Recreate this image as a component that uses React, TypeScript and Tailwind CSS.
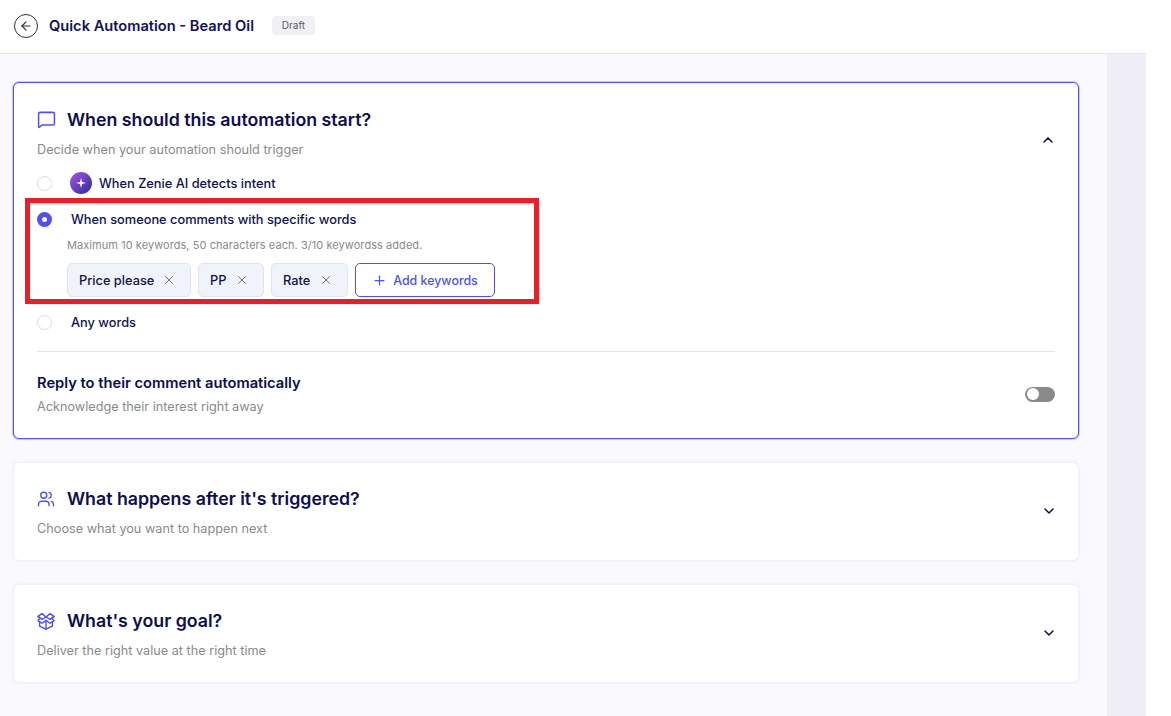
import { MessageSquare, Users, ChevronUp, ChevronDown, X, Plus, ArrowLeft } from "lucide-react";

const font = { fontFamily: "Inter, sans-serif" };

function BoxIcon() {
  return (
    <svg width="18" height="18" viewBox="0 0 18 18" fill="none" stroke="#4f4ff5" strokeWidth="1.4" strokeLinejoin="round" strokeLinecap="round">
      <path d="M9 5 5 1.6 1 4.4 5 7.4 9 5 13 7.4 17 4.4 13 1.6 9 5Z" />
      <path d="M1 4.4 3 6.2 1 8.8 5 11.2 9 8.4 13 11.2 17 8.8 15 6.2 17 4.4" />
      <path d="M2.6 10v4.2L9 17.2l6.4-3V10" />
      <path d="M9 8.4v8.8" />
    </svg>
  );
}

function Chip({ label, w }: { label: string; w: string }) {
  return (
    <div className={`${w} h-[34px] flex items-center justify-between pl-[11px] pr-[14px] rounded-[5px] border border-[#dfe5f1] bg-[#f0f3f9]`}>
      <span className="text-[12.8px] font-[450] text-[#11114f] pt-[1px]">{label}</span>
      <X size={14} strokeWidth={1.7} className="text-[#6b7280]" />
    </div>
  );
}

function Radio({ checked }: { checked?: boolean }) {
  return checked ? (
    <div className="w-[15px] h-[15px] rounded-full border-[5px] border-[#4f4ff5] bg-white" />
  ) : (
    <div className="w-[15px] h-[15px] rounded-full border border-[#dcdcdc] bg-white" />
  );
}

function Collapsed({ icon, title, sub }: { icon: React.ReactNode; title: string; sub: string }) {
  return (
    <section className="h-[99px] rounded-[6px] bg-white border border-[#f0f0f5] shadow-[0_0_3px_rgba(60,60,110,0.07)] pl-[23px] pr-[21px] pt-[24px] flex justify-between">
      <div>
        <div className="flex items-center gap-[12px] h-[24px]">
          <span className="w-[18px] flex justify-center">{icon}</span>
          <h2 className="text-[17.75px] font-semibold text-[#0d0d52] leading-[24px]">{title}</h2>
        </div>
        <p className="text-[12.7px] text-[#8a8a8a] mt-[9px] leading-[18px]">{sub}</p>
      </div>
      <ChevronDown size={16} strokeWidth={2.2} className="text-[#0d0d52] mt-[16px]" />
    </section>
  );
}

export default function App() {
  return (
    <div style={font} className="relative h-[716px] w-[1171px] overflow-hidden bg-white">
      <div className="w-[1146px] h-full flex flex-col">
        <header className="h-[54px] shrink-0 bg-white border-b border-[#e6e6f0] flex items-center pl-[14px] pb-[2px]">
          <div className="w-[24px] h-[24px] rounded-full border-[1.5px] border-[#2f2f3a] flex items-center justify-center">
            <ArrowLeft size={14} strokeWidth={2} className="text-[#2f2f3a]" />
          </div>
          <h1 className="ml-[11px] pt-[2px] text-[14.65px] font-semibold text-[#12125a]">Quick Automation - Beard Oil</h1>
          <span className="ml-[18px] h-[19px] w-[43px] rounded-[4px] bg-[#f1f1f4] flex items-center justify-center text-[10px] text-[#5b5b78]">Draft</span>
        </header>
        <div className="flex flex-1 min-h-0">
          <main className="w-[1107px] bg-[#f9f9fe] pl-[13px] pt-[28px] flex flex-col gap-[23px]">
            <section className="w-[1066px] h-[357px] rounded-[6px] bg-white border border-[#5353f5] ring-1 ring-[#5353f5]/30 pl-[23px] pr-[23px] pt-[25px]">
              <div className="flex justify-between">
                <div>
                  <div className="flex items-center gap-[11px] h-[24px]">
                    <MessageSquare size={19} strokeWidth={1.9} className="text-[#4f4ff5] -mt-[2px]" />
                    <h2 className="text-[17.75px] font-semibold text-[#0d0d52] leading-[24px]">When should this automation start?</h2>
                  </div>
                  <p className="text-[12.7px] text-[#8a8a8a] mt-[9px] leading-[18px]">Decide when your automation should trigger</p>
                </div>
                <ChevronUp size={16} strokeWidth={2.2} className="text-[#0d0d52] mt-[24px] -mr-[1px]" />
              </div>
              <div className="flex items-center mt-[13px] h-[22px]">
                <Radio />
                <div className="ml-[18px] w-[22px] h-[22px] rounded-full bg-gradient-to-br from-[#b150ee] to-[#1b2a9a] flex items-center justify-center">
                  <svg width="12" height="12" viewBox="0 0 12 12"><path d="M6 1 7 5 11 6 7 7 6 11 5 7 1 6 5 5Z" fill="white" /></svg>
                </div>
                <span className="ml-[7px] pt-[2px] text-[12.8px] font-[450] text-[#11114f]">When Zenie AI detects intent</span>
              </div>
              <div className="flex items-center mt-[15px] h-[20px]">
                <Radio checked />
                <span className="ml-[19px] pt-[2px] text-[12.8px] font-[450] text-[#11114f]">When someone comments with specific words</span>
              </div>
              <p className="ml-[30px] mt-[8px] text-[11px] leading-[16px] text-[#8a8a8a] tracking-[0.06px]">Maximum 10 keywords, 50 characters each. 3/10 keywordss added.</p>
              <div className="ml-[30px] mt-[10px] flex gap-[7px]">
                <Chip label="Price please" w="w-[124px]" />
                <Chip label="PP" w="w-[66px]" />
                <Chip label="Rate" w="w-[77px]" />
                <button className="w-[140px] h-[34px] rounded-[5px] border border-[#4f4ff5] bg-white flex items-center justify-center gap-[6px] text-[12.4px] text-[#4f4ff5] font-[450]">
                  <Plus size={15} strokeWidth={2} />
                  <span className="pt-[2px]">Add keywords</span>
                </button>
              </div>
              <div className="flex items-center mt-[15px] h-[20px]">
                <Radio />
                <span className="ml-[19px] pt-[2px] text-[12.8px] font-[450] text-[#11114f]">Any words</span>
              </div>
              <div className="h-px bg-[#e5e5e8] mt-[19px]" />
              <div className="flex items-center justify-between mt-[21px]">
                <div>
                  <h3 className="text-[14.7px] font-semibold text-[#0d0d52] leading-[20px]">Reply to their comment automatically</h3>
                  <p className="text-[12.7px] text-[#8a8a8a] mt-[5px] leading-[18px]">Acknowledge their interest right away</p>
                </div>
                <div className="w-[30px] h-[15px] rounded-full bg-[#8a8a8a] flex items-center pl-[2px] -mt-[1px]">
                  <div className="w-[12px] h-[12px] rounded-full bg-white" />
                </div>
              </div>
            </section>
            <div className="w-[1066px] flex flex-col gap-[23px]">
              <Collapsed icon={<Users size={18} strokeWidth={1.8} className="text-[#4f4ff5]" />} title="What happens after it's triggered?" sub="Choose what you want to happen next" />
              <Collapsed icon={<BoxIcon />} title="What's your goal?" sub="Deliver the right value at the right time" />
            </div>
          </main>
          <aside className="flex-1 bg-[#f0eff8]" />
        </div>
      </div>
      <div className="absolute left-[25px] top-[198px] w-[514px] h-[106px] border-[5px] border-[#ee1c25]" />
    </div>
  );
}
